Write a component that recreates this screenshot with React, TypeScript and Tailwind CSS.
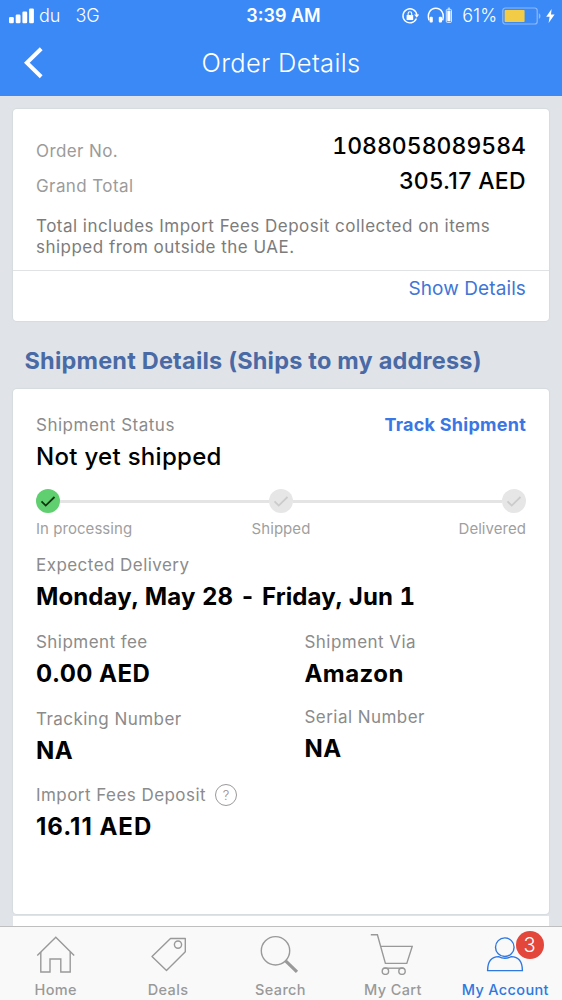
import React from 'react'

const SHIPMENT_STEPS = [
  { label: 'In processing', done: true },
  { label: 'Shipped', done: false },
  { label: 'Delivered', done: false },
]

const StatusBar: React.FC = () => (
  <div className="grid h-[31px] grid-cols-[1fr_auto_1fr] items-center pl-[9px] pr-[7px] text-[18px] leading-[31px]">
    <div className="flex items-center">
      <svg width="26" height="16" viewBox="0 0 26 16" fill="currentColor">
        <rect x="0" y="9" width="4.8" height="6.2" rx="1.2" />
        <rect x="6.7" y="6.6" width="4.8" height="8.6" rx="1.2" />
        <rect x="13.4" y="3.6" width="4.8" height="11.6" rx="1.2" />
        <rect x="20.1" y="0.6" width="4.8" height="14.6" rx="1.2" />
      </svg>
      <span className="ml-[4px] font-light">du</span>
      <span className="ml-[15px] font-light">3G</span>
    </div>
    <span className="pl-[3px] font-semibold">3:39 AM</span>
    <div className="flex items-center justify-end">
      {/* Rotation lock */}
      <svg width="18" height="18" viewBox="0 0 18 18" fill="none" stroke="currentColor" strokeWidth="1.4">
        <path d="M15.4 11.6A7 7 0 1 1 15.9 8" />
        <path d="M13.2 7.6h5l-2.5 3.2z" fill="currentColor" stroke="none" />
        <rect x="5.6" y="8" width="6.6" height="5" rx="0.6" fill="currentColor" stroke="none" />
        <path d="M7.1 8.2V6.6a1.8 1.8 0 0 1 3.6 0v1.6" strokeWidth="1.1" />
      </svg>
      {/* Headphones with their battery */}
      <svg className="ml-[8px]" width="27" height="17" viewBox="0 0 27 17" fill="none" stroke="currentColor" strokeWidth="1.5">
        <path d="M2 13.4C-0.2 6 3.6 1.2 8.8 1.2s9 4.8 6.8 12.2" />
        <rect x="2.6" y="9.8" width="3.2" height="5.8" rx="1" fill="currentColor" stroke="none" />
        <rect x="11.8" y="9.8" width="3.2" height="5.8" rx="1" fill="currentColor" stroke="none" />
        <rect x="19.3" y="2.4" width="5.2" height="13" rx="1" strokeWidth="0.8" />
        <rect x="20.3" y="3.6" width="3.2" height="10.6" fill="currentColor" stroke="none" />
        <path d="M20.8 1.2h2.2" strokeWidth="0.9" />
      </svg>
      <span className="ml-[8px] font-light">61%</span>
      <svg className="ml-[5px]" width="40" height="18" viewBox="0 0 40 18" fill="none">
        <rect x="0.8" y="1" width="34.4" height="16" rx="2.6" stroke="#8bb8fa" strokeWidth="1.2" />
        <rect x="2.6" y="3" width="20" height="12" rx="0.8" fill="#f2cb47" />
        <path d="M36.8 6.2c2.2 0.6 2.2 5 0 5.6z" fill="#8bb8fa" />
      </svg>
      <svg className="ml-[4px]" width="9" height="14" viewBox="0 0 9 14" fill="currentColor">
        <path d="M5.6 0 0.2 7.8h3.4L2.6 14l6-8.4H5z" />
      </svg>
    </div>
  </div>
)

const Header: React.FC = () => (
  <header className="h-24 shrink-0 bg-[#3b89f6] text-white">
    <StatusBar />
    <div className="grid h-[63px] grid-cols-[1fr_auto_1fr] items-center">
      <svg className="ml-[24px]" width="20" height="32" viewBox="0 0 20 32" fill="none" stroke="currentColor" strokeWidth="4">
        <path d="M17.2 1.8 2.8 15.8l14.4 14" />
      </svg>
      <h1 className="text-[25.5px] font-light leading-[63px] tracking-[0.35px]">Order Details</h1>
    </div>
  </header>
)

interface FieldProps {
  label: string
  value: string
  help?: boolean
  valueClass?: string
}

const Field: React.FC<FieldProps> = ({ label, value, help, valueClass = 'tracking-[0.45px]' }) => (
  <div>
    <div className="flex h-[22px] items-center text-[17px] leading-[22px] tracking-[0.45px] text-[#8b8b8b]">
      {label}
      {help && (
        <span className="ml-[9px] flex size-[22px] items-center justify-center rounded-full border border-[#9a9a9a] text-[13px] font-light tracking-normal">
          ?
        </span>
      )}
    </div>
    <div className={`mt-[6px] text-[24px] font-bold leading-[30px] text-black ${valueClass}`}>{value}</div>
  </div>
)

const Check: React.FC<{ done: boolean }> = ({ done }) => (
  <span className={done ? 'flex size-6 items-center justify-center rounded-full bg-[#60cf70] text-[#10350f]' : 'flex size-6 items-center justify-center rounded-full bg-[#e6e6e6] text-[#cbcbcb]'}>
    <svg width="16" height="14" viewBox="0 0 16 14" fill="none" stroke="currentColor" strokeWidth="1.8">
      <path d="m1.5 7.4 4.2 4.2 8.8-8.6" />
    </svg>
  </span>
)

const OrderSummary: React.FC = () => (
  <section className="mt-[13px] h-[212px] shrink-0 rounded-[4px] bg-white shadow-[0_0_1px_1px_#d5dbdf]">
    <div className="h-[161px] px-[23px] pt-[20px]">
      <div className="flex h-[35px] items-center justify-between">
        <span className="pt-[10px] text-[17px] tracking-[0.4px] text-[#9b9b9b]">Order No.</span>
        <span className="text-[23px] font-medium text-black tabular-nums">1088058089584</span>
      </div>
      <div className="flex h-[35px] items-center justify-between">
        <span className="pt-[10px] text-[17px] tracking-[0.4px] text-[#9b9b9b]">Grand Total</span>
        <span className="text-[23px] font-medium tracking-[0.35px] text-black">305.17 AED</span>
      </div>
      <p className="mt-[17px] text-[17px] leading-[20.7px] tracking-[0.48px] text-[#7c7c7c]">
        Total includes Import Fees Deposit collected on items
        <br />
        shipped from outside the UAE.
      </p>
    </div>
    <div className="border-t border-[#dfe3e4] px-[23px] pt-[5px] text-right text-[19px] leading-[26px] tracking-[0.1px] text-[#3f76d6]">
      Show Details
    </div>
  </section>
)

const ShipmentCard: React.FC = () => (
  <section className="h-[525px] shrink-0 rounded-[4px] bg-white px-[23px] pt-[25px] shadow-[0_0_1px_1px_#d5dbdf]">
    <div className="flex h-[22px] items-center justify-between leading-[22px]">
      <span className="text-[17px] tracking-[0.5px] text-[#8b8b8b]">Shipment Status</span>
      <span className="text-[18px] font-bold tracking-[0.25px] text-[#3a76e4]">Track Shipment</span>
    </div>
    <div className="mt-[6px] text-[24px] font-medium leading-[30px] tracking-[0.3px] text-black">Not yet shipped</div>

    <div className="mt-[17px] flex items-center">
      {SHIPMENT_STEPS.map((step, index) => (
        <React.Fragment key={step.label}>
          {index > 0 && <span className="h-[3px] flex-1 bg-[#e4e4e4]" />}
          <Check done={step.done} />
        </React.Fragment>
      ))}
    </div>
    <div className="mt-[6px] grid grid-cols-[1fr_auto_1fr] text-[15px] leading-[20px] tracking-[0.05px] text-[#9f9f9f]">
      <span>In processing</span>
      <span>Shipped</span>
      <span className="text-right">Delivered</span>
    </div>

    <div className="mt-[15px]">
      <Field label="Expected Delivery" value="Monday, May 28 - Friday, Jun 1" valueClass="tracking-[0.1px] tabular-nums" />
    </div>
    <div className="mt-[19px] grid grid-cols-[268.5px_1fr]">
      <div className="flex flex-col gap-[18.5px]">
        <Field label="Shipment fee" value="0.00 AED" />
        <Field label="Tracking Number" value="NA" />
        <Field label="Import Fees Deposit" value="16.11 AED" valueClass="tracking-[1px]" help />
      </div>
      <div className="flex flex-col gap-[17px]">
        <Field label="Shipment Via" value="Amazon" />
        <Field label="Serial Number" value="NA" />
      </div>
    </div>
  </section>
)

const TABS = [
  {
    label: 'Home',
    icon: (
      <>
        <path d="M11.3 28.4 29.8 10.2l18.4 18.2" />
        <path d="M14.8 25v20h9.2V32h10.8v13h9.4V25" />
      </>
    ),
  },
  {
    label: 'Deals',
    icon: (
      <>
        <path d="M31.5 11.5h14.8v13.2L27.5 43.4 13 29.6z" strokeLinejoin="round" />
        <circle cx="39" cy="17.6" r="3.6" />
      </>
    ),
  },
  {
    label: 'Search',
    icon: (
      <>
        <circle cx="24.5" cy="23.8" r="14.2" />
        <path d="m34.6 33.8 11.4 11" strokeWidth="3.2" />
      </>
    ),
  },
  {
    label: 'My Cart',
    icon: (
      <>
        <path d="M7.8 7.8h6.6l8 28.6h21.4l5.4-17H18" />
        <path d="M20.6 41.2h20" />
        <circle cx="22.4" cy="44.2" r="3.2" />
        <circle cx="39" cy="44.2" r="3.2" />
      </>
    ),
  },
  {
    label: 'My Account',
    icon: (
      <>
        <circle cx="28.8" cy="20.2" r="9.3" />
        <path d="M11.6 43.6c0-9 4-13.8 11-14 3.8 2 8.8 2 12.6 0 7 0.2 11.2 5 11.2 14z" />
      </>
    ),
    badge: 3,
    active: true,
  },
]

const TabBar: React.FC = () => (
  <nav className="grid h-[74px] shrink-0 grid-cols-5 border-t border-[#bfbfbf] bg-[#f9f9f9]">
    {TABS.map((tab) => (
      <div
        key={tab.label}
        className={tab.active ? 'relative flex flex-col items-center text-[#2f78e0]' : 'relative flex flex-col items-center text-[#999999]'}
      >
        <svg width="60" height="48" viewBox="0 0 60 48" fill="none" stroke="currentColor" strokeWidth="1.4">
          {tab.icon}
        </svg>
        <span className="mt-[5px] whitespace-nowrap pr-px text-[14.5px] font-medium leading-[20px] tracking-[0.35px]">{tab.label}</span>
        {tab.badge && (
          <span className="absolute left-[66px] top-[4px] flex size-[28px] items-center justify-center rounded-full bg-[#e3463a] text-[20px] font-light text-white">
            {tab.badge}
          </span>
        )}
      </div>
    ))}
  </nav>
)

const App: React.FC = () => {
  return (
    <div className="flex h-[1000px] w-[562px] flex-col overflow-hidden bg-[#e0e4e9] font-['Inter','Liberation_Sans',sans-serif]">
      <Header />
      <main className="flex min-h-0 flex-1 flex-col overflow-hidden px-[13px]">
        <OrderSummary />
        <h2 className="ml-[11.5px] mt-[25px] h-[43px] shrink-0 text-[23.5px] font-bold leading-[30px] tracking-[0.2px] text-[#4a6aa5]">
          Shipment Details (Ships to my address)
        </h2>
        <ShipmentCard />
        <div className="mt-[2px] h-[10px] shrink-0 bg-white" />
      </main>
      <TabBar />
    </div>
  )
}

export default App
